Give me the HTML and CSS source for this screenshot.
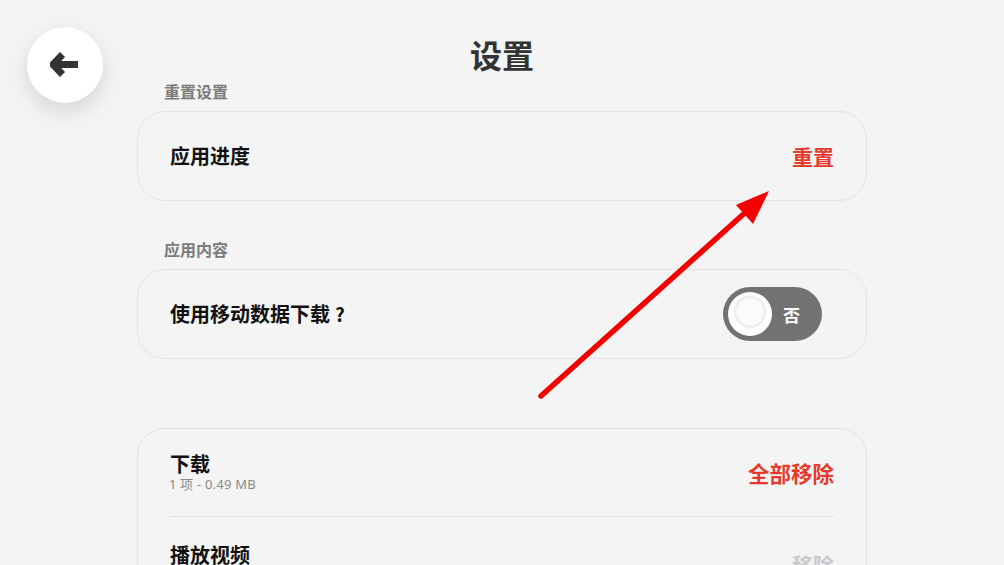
FILE: index.html
```html
<!DOCTYPE html>
<html lang="zh-CN">
<head>
  <meta charset="UTF-8">
  <meta name="viewport" content="width=device-width, initial-scale=1.0">
  <title>设置</title>
  <link rel="stylesheet" href="styles.css">
</head>
<body>

<!-- Floating back button -->
<button class="back-button" aria-label="返回">
  <svg width="30" height="26" viewBox="0 0 30 26">
    <path d="M12.5 2.5 L3 12.5 L12.5 22.5" fill="none" stroke="#333" stroke-width="7" stroke-linejoin="miter" stroke-linecap="butt"/>
    <path d="M6 12.5 H28" stroke="#333" stroke-width="7"/>
  </svg>
</button>

<div class="page">
  <h1 class="title">设置</h1>

  <section class="section">
    <div class="section-label">重置设置</div>
    <div class="card">
      <div class="row">
        <div class="row-title">应用进度</div>
        <button class="link-button">重置</button>
      </div>
    </div>
  </section>

  <section class="section">
    <div class="section-label">应用内容</div>
    <div class="card">
      <div class="row">
        <div class="row-title">使用移动数据下载<span class="qmark">?</span></div>
        <div class="toggle">
          <span class="knob"></span>
          <span class="toggle-text">否</span>
        </div>
      </div>
    </div>
  </section>

  <section class="section section-downloads">
    <div class="card">
      <div class="row row-dl">
        <div>
          <div class="row-title">下载</div>
          <div class="row-sub">1 项 - 0.49 MB</div>
        </div>
        <button class="link-button link-large">全部移除</button>
      </div>
      <div class="divider"></div>
      <div class="row row-dl row-video">
        <div class="row-title">播放视频</div>
        <button class="link-button link-muted">移除</button>
      </div>
    </div>
  </section>
</div>

<!-- Annotation arrow drawn over the page -->
<svg class="annotation" width="1004" height="565" viewBox="0 0 1004 565">
  <line x1="541" y1="396" x2="748" y2="210" stroke="#f40000" stroke-width="5.5" stroke-linecap="round"/>
  <polygon points="769,191 736,205 753,224" fill="#f40000"/>
</svg>

</body>
</html>
```

FILE: styles.css
```css
body {
  margin: 0;
  padding: 0;
  background-color: #f4f4f4;
  font-family: "Noto Sans CJK SC", "Noto Sans", sans-serif;
  color: #111;
  height: 565px;
  overflow: hidden;
}

.back-button {
  position: absolute;
  left: 27px;
  top: 27px;
  width: 76px;
  height: 76px;
  border-radius: 50%;
  border: none;
  background: #fff;
  box-shadow: 0 8px 22px rgba(0, 0, 0, 0.13);
  display: flex;
  align-items: center;
  justify-content: center;
  padding: 0;
  cursor: pointer;
}

.page {
  width: 730px;
  margin: 0 auto;
  padding-top: 33px;
}

.title {
  margin: 0;
  text-align: center;
  font-size: 32px;
  line-height: 42px;
  font-weight: 700;
  color: #333;
}

.section {
  margin-top: 6px;
}

.section + .section {
  margin-top: 38px;
}

.section-label {
  padding-left: 27px;
  font-size: 16px;
  line-height: 20px;
  font-weight: 700;
  color: #7b7b7b;
  margin-bottom: 10px;
}

.section-downloads {
  margin-top: 69px !important;
}

.card {
  border: 1px solid #e3e3e3;
  border-radius: 28px;
  background: #f4f4f4;
  padding: 0 32px;
}

.row {
  height: 88px;
  display: flex;
  align-items: center;
  justify-content: space-between;
}

.row-dl {
  height: 87px;
}

.row-video {
  align-items: flex-start;
  padding-top: 28px;
  box-sizing: border-box;
}

.row-video .link-button {
  margin-top: 4px;
}

.row-title {
  font-size: 20px;
  line-height: 20px;
  font-weight: 700;
  color: #111;
}

.qmark {
  display: inline-block;
  width: 20px;
  text-align: center;
  font-size: 19px;
}

.row-sub {
  font-family: "Noto Sans", sans-serif;
  font-size: 13px;
  line-height: 14px;
  letter-spacing: 0.2px;
  color: #8a8a8a;
  margin-top: 3px;
  margin-left: -1px;
}

.link-button {
  background: none;
  border: none;
  padding: 0;
  font-family: "Noto Sans CJK SC", "Noto Sans", sans-serif;
  font-size: 21px;
  font-weight: 700;
  color: #e63a2c;
  cursor: pointer;
}

.link-large {
  font-size: 21.5px;
}

.link-muted {
  font-size: 21px;
  color: #c9c9c9;
}

.divider {
  height: 1px;
  background: #e0e0e0;
}

.toggle {
  width: 99px;
  height: 54px;
  border-radius: 27px;
  background: #727272;
  display: flex;
  align-items: center;
  margin-right: 12px;
  box-sizing: border-box;
  padding-left: 5px;
}

.knob {
  width: 44px;
  height: 44px;
  border-radius: 50%;
  background: radial-gradient(circle at 50% 45%, #fbfbfb 0, #fbfbfb 13px, #e9e9e9 15px, #ffffff 17px);
}

.toggle-text {
  margin-left: 11px;
  font-size: 17px;
  font-weight: 700;
  color: #fff;
}

.annotation {
  position: absolute;
  left: 0;
  top: 0;
  pointer-events: none;
}
```
